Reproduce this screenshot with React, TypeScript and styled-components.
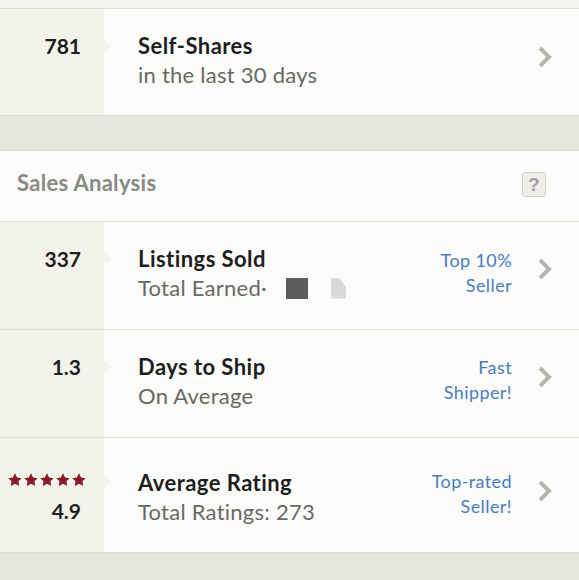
import styled, { createGlobalStyle } from 'styled-components';

const GlobalStyle = createGlobalStyle`
  body {
    margin: 0;
    background: #e6e5de;
    font-family: Lato, "Noto Sans", sans-serif;
  }
`;

const Page = styled.div`
  width: 579px;
  height: 580px;
  overflow: hidden;
  display: flex;
  flex-direction: column;
`;

const TopStrip = styled.div`
  height: 8px;
  background: #f6f6f0;
  border-bottom: 1px solid #dcdcd3;
`;

const Card = styled.section`
  background: #fcfcfa;
  border-bottom: 1px solid #dcdcd3;
`;

const Spacer = styled.div`
  height: 34px;
  border-bottom: 1px solid #dcdcd3;
`;

const Header = styled.div`
  height: 71px;
  box-sizing: border-box;
  display: flex;
  align-items: center;
  justify-content: space-between;
  padding: 0 33px 8px 17px;
  border-bottom: 1px solid #deded6;
  color: #8a8a84;
  font-size: 22px;
  font-weight: 700;
  letter-spacing: 0.3px;
`;

const HelpBox = styled.span`
  width: 22px;
  height: 23px;
  margin-top: 5px;
  border: 1px solid #d2d2cc;
  border-radius: 3px;
  background: #efefea;
  color: #a2a29d;
  font-family: "Liberation Sans", Arial, sans-serif;
  font-size: 19px;
  font-weight: 700;
  display: flex;
  align-items: center;
  justify-content: center;
`;

const Row = styled.div<{ $h: number; $last?: boolean }>`
  height: ${(p) => p.$h}px;
  display: grid;
  grid-template-columns: 104px 1fr;
  border-bottom: ${(p) => (p.$last ? 'none' : '1px solid #e0e0d8')};
`;

const Left = styled.div<{ $pt: number }>`
  background: #f3f3eb;
  padding: ${(p) => p.$pt}px 23px 0 0;
  display: flex;
  flex-direction: column;
  align-items: flex-end;
  position: relative;

  &::after {
    content: '';
    position: absolute;
    right: -8px;
    top: ${(p) => p.$pt + 5}px;
    border-top: 7px solid transparent;
    border-bottom: 7px solid transparent;
    border-left: 8px solid #f5f5ef;
  }
`;

const Num = styled.div<{ $gap?: number }>`
  margin-top: ${(p) => p.$gap ?? 0}px;
  font-size: 21px;
  line-height: 24px;
  font-weight: 700;
  color: #1e1e1e;
`;

const Stars = styled.div`
  display: flex;
  gap: 2px;
  height: 20px;
  align-items: center;
  margin-right: -5px;
`;

const Right = styled.div<{ $pt: number }>`
  display: flex;
  align-items: flex-start;
  padding: ${(p) => p.$pt}px 26px 0 34px;
`;

const Info = styled.div`
  flex: 1;
`;

const Title = styled.div`
  font-size: 22px;
  line-height: 24px;
  font-weight: 700;
  letter-spacing: 0.45px;
  color: #1e1e1e;
`;

const Sub = styled.div`
  font-size: 22px;
  line-height: 34px;
  letter-spacing: 0.25px;
  color: #686865;
  display: flex;
  align-items: center;
`;

const Redact = styled.span<{ $light?: boolean }>`
  display: inline-block;
  width: ${(p) => (p.$light ? 15 : 22)}px;
  height: 21px;
  margin-left: ${(p) => (p.$light ? 23 : 19)}px;
  background: ${(p) => (p.$light ? '#dadada' : '#5c5c5c')};
  clip-path: ${(p) =>
    p.$light ? 'polygon(0 0, 55% 0, 100% 45%, 100% 100%, 0 100%)' : 'none'};
`;

const Badge = styled.div<{ $mt: number }>`
  margin: ${(p) => p.$mt}px 25px 0 0;
  text-align: right;
  color: #4a7cbd;
  font-size: 18px;
  line-height: 25px;
  letter-spacing: 0.4px;
`;

const ChevronBox = styled.div<{ $mt: number }>`
  margin-top: ${(p) => p.$mt}px;
  display: flex;
`;

const Chevron = ({ mt }: { mt: number }) => (
  <ChevronBox $mt={mt}>
    <svg width="16" height="22" viewBox="0 0 16 22">
      <polyline
        points="3,2 12,11 3,20"
        fill="none"
        stroke="#b6b6b1"
        strokeWidth="4"
      />
    </svg>
  </ChevronBox>
);

const Star = () => (
  <svg width="14" height="14" viewBox="0 0 24 24">
    <path
      d="M12 0.5l3.7 7.1 7.8 1.2-5.6 5.5 1.3 7.8L12 18.4 4.8 22.1l1.3-7.8L0.5 8.8l7.8-1.2z"
      fill="#8c1c2c"
    />
  </svg>
);

export default function App() {
  return (
    <Page>
      <GlobalStyle />
      <TopStrip />
      <Card>
        <Row $h={106} $last>
          <Left $pt={25}>
            <Num>781</Num>
          </Left>
          <Right $pt={25}>
            <Info>
              <Title>Self-Shares</Title>
              <Sub>in the last 30 days</Sub>
            </Info>
            <Chevron mt={12} />
          </Right>
        </Row>
      </Card>
      <Spacer />
      <Card>
        <Header>
          Sales Analysis
          <HelpBox>?</HelpBox>
        </Header>
        <Row $h={107}>
          <Left $pt={25}>
            <Num>337</Num>
          </Left>
          <Right $pt={25}>
            <Info>
              <Title>Listings Sold</Title>
              <Sub>
                Total Earned·
                <Redact />
                <Redact $light />
              </Sub>
            </Info>
            <Badge $mt={1}>
              Top 10%
              <br />
              Seller
            </Badge>
            <Chevron mt={11} />
          </Right>
        </Row>
        <Row $h={107}>
          <Left $pt={25}>
            <Num>1.3</Num>
          </Left>
          <Right $pt={25}>
            <Info>
              <Title>Days to Ship</Title>
              <Sub>On Average</Sub>
            </Info>
            <Badge $mt={0}>
              Fast
              <br />
              Shipper!
            </Badge>
            <Chevron mt={11} />
          </Right>
        </Row>
        <Row $h={114} $last>
          <Left $pt={32}>
            <Stars>
              <Star />
              <Star />
              <Star />
              <Star />
              <Star />
            </Stars>
            <Num $gap={9}>4.9</Num>
          </Left>
          <Right $pt={33}>
            <Info>
              <Title>Average Rating</Title>
              <Sub>Total Ratings: 273</Sub>
            </Info>
            <Badge $mt={-2}>
              Top-rated
              <br />
              Seller!
            </Badge>
            <Chevron mt={9} />
          </Right>
        </Row>
      </Card>
    </Page>
  );
}
